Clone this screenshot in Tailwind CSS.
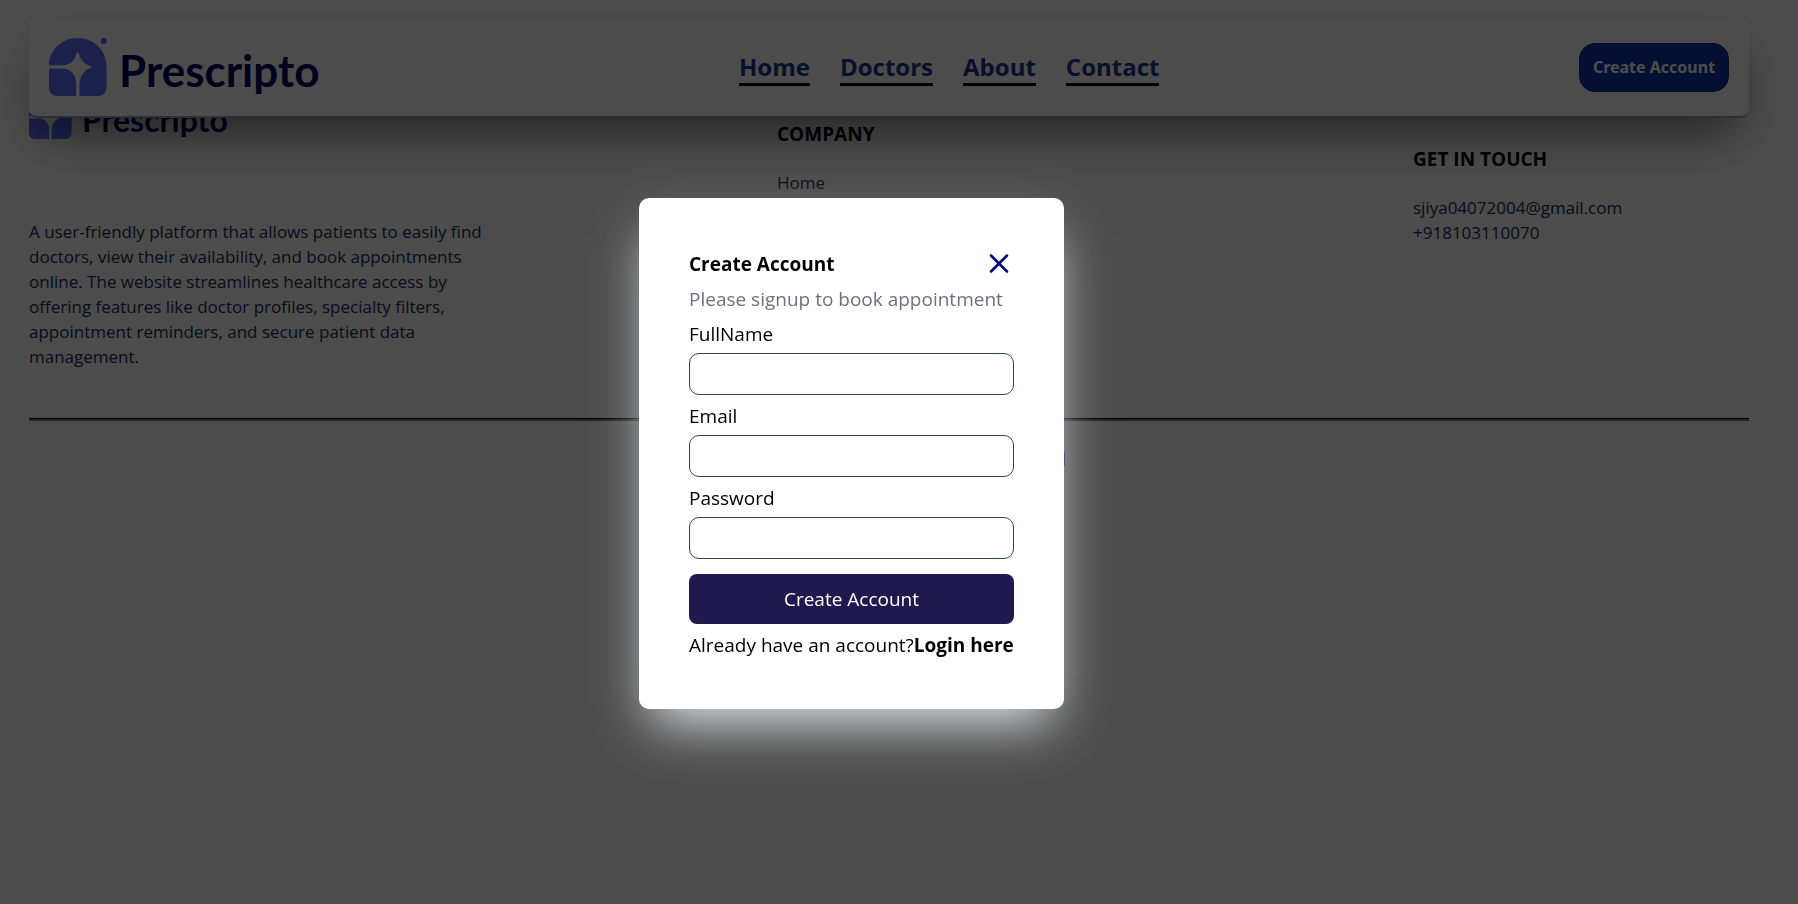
<!DOCTYPE html>
<html lang="en">
<head>
<meta charset="utf-8">
<title>Prescripto</title>
<script src="https://cdn.jsdelivr.net/npm/@tailwindcss/browser@4"></script>
</head>
<body class="min-h-screen bg-white font-['Open_Sans',sans-serif] text-black">
<svg class="hidden">
  <symbol id="mark" viewBox="0 0 58 58">
    <path d="M0 27.200C0 12 13 0 28.700 0S57.500 12 57.500 28V50a8 8 0 0 1-8 8H30.500V46C31 37 36 31 43.500 29C36 26.500 31 22 30 15.500Q28.700 12.500 27.400 15.500C26 22 22 27.200 14 27.200Z"/>
    <path d="M0 30.500H14C22 31 27 37 27.200 46V58H8a8 8 0 0 1-8-8Z"/>
    <circle cx="54.700" cy="3" r="3"/>
  </symbol>
</svg>
<div class="pt-[18px] pr-[49px] pl-[29px]">
  <header class="sticky top-[18px] z-10 flex h-[100px] items-center justify-between rounded-lg border-b-2 border-slate-400 bg-white px-5 shadow-2xl shadow-black/55">
    <a href="#" class="flex items-center gap-3 text-[#000060]">
      <svg class="h-[58px] w-[58px] overflow-visible fill-[#5f6fff]"><use href="#mark"/></svg>
      <span class="pt-1.5 font-['Lato',sans-serif] text-[44px] leading-none font-bold">Prescripto</span>
    </a>
    <nav class="flex gap-[30px] pt-0.5 text-2xl font-bold text-blue-900">
      <a href="#" class="border-b-[3px] border-[#000020]">Home</a>
      <a href="#" class="border-b-[3px] border-[#000020]">Doctors</a>
      <a href="#" class="border-b-[3px] border-[#000020]">About</a>
      <a href="#" class="border-b-[3px] border-[#000020]">Contact</a>
    </nav>
    <button type="button" class="h-[49px] w-[150px] rounded-2xl border border-blue-950 bg-[#1035ab] font-['Noto_Sans',sans-serif] text-base font-bold text-white">Create Account</button>
  </header>
  <footer class="-mt-[22px] text-[17px] leading-[25px] text-[#1c2f5c]">
    <div class="grid h-[322px] grid-cols-[748fr_636fr_336fr]">
      <div>
        <div class="flex items-center gap-2.5 text-[#000060]">
          <svg class="h-[43px] w-[43px] overflow-visible fill-[#5f6fff]"><use href="#mark"/></svg>
          <span class="pt-1 font-['Lato',sans-serif] text-[32px] leading-none font-bold">Prescripto</span>
        </div>
        <p class="mt-20 max-w-[460px]">A user-friendly platform that allows patients to easily find doctors, view their availability, and book appointments online. The website streamlines healthcare access by offering features like doctor profiles, specialty filters, appointment reminders, and secure patient data management.</p>
      </div>
      <div class="pt-[26px]">
        <h2 class="text-[19px] leading-[25px] font-bold text-black">COMPANY</h2>
        <ul class="mt-[23px]"><li>Home</li></ul>
      </div>
      <div class="pt-[51px]">
        <h2 class="text-[19px] leading-[25px] font-bold text-black">GET IN TOUCH</h2>
        <ul class="mt-[23px]"><li>sjiya04072004@gmail.com</li><li>+918103110070</li></ul>
      </div>
    </div>
    <hr class="h-[3px] border-t border-b-2 border-t-black border-b-gray-500">
    <div class="mx-auto mt-[31px] h-3.5 w-[352px] border-r-2 border-blue-700"></div>
  </footer>
</div>
<div class="fixed inset-0 z-20 flex items-center justify-center bg-black/70 pt-[3px] pr-[95px]">
  <form class="flex w-[425px] flex-col rounded-[10px] bg-white p-[50px] pb-[51px] text-[19px] leading-[25px] shadow-2xl shadow-gray-200">
    <div class="flex items-center justify-between pt-1 pr-[3px]">
      <h1 class="font-bold">Create Account</h1>
      <button type="button" aria-label="Close" class="h-6 w-6"><svg viewBox="0 0 24 24" class="fill-none stroke-[#00007a] stroke-[2.5]" stroke-linecap="round"><path d="M4 2.500L20 18.500M20 2.500L4 18.500"/></svg></button>
    </div>
    <p class="mt-2.5 text-gray-500">Please signup to book appointment</p>
    <label for="n" class="mt-2.5">FullName</label>
    <input id="n" type="text" class="mt-1.5 h-[42px] rounded-[10px] border border-slate-700 px-3">
    <label for="e" class="mt-[9px]">Email</label>
    <input id="e" type="email" class="mt-1.5 h-[42px] rounded-[10px] border border-slate-700 px-3">
    <label for="p" class="mt-[9px]">Password</label>
    <input id="p" type="password" class="mt-1.5 h-[42px] rounded-[10px] border border-slate-700 px-3">
    <button type="submit" class="mt-[15px] h-[50px] rounded-lg bg-indigo-950 text-white">Create Account</button>
    <p class="mt-[9px] whitespace-nowrap">Already have an account?<a href="#" class="font-bold">Login here</a></p>
  </form>
</div>
</body>
</html>
